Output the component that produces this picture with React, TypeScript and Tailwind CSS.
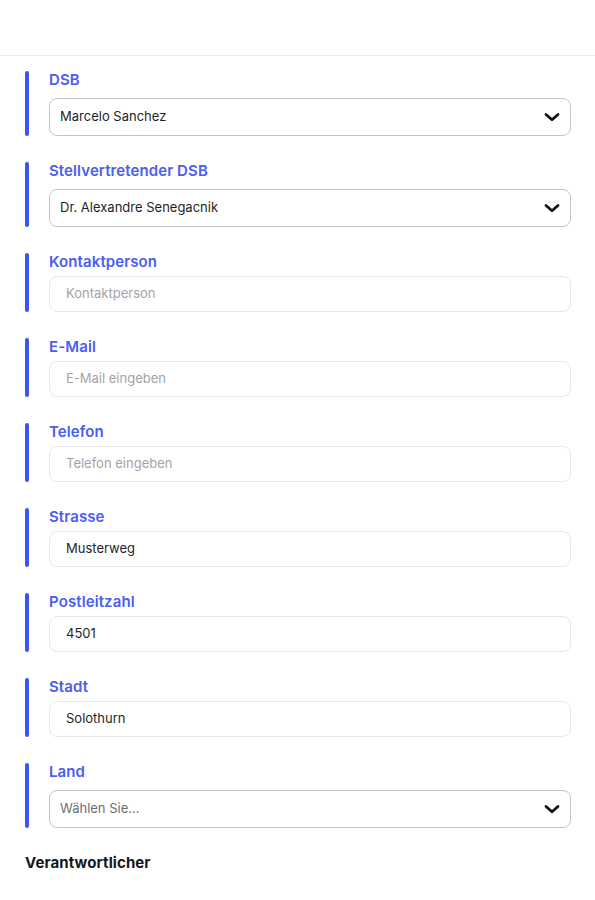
import React from "react";

type Field =
  | { kind: "select"; label: string; value?: string; placeholder?: string }
  | { kind: "text"; label: string; value?: string; placeholder?: string };

const FIELDS: Field[] = [
  { kind: "select", label: "DSB", value: "Marcelo Sanchez" },
  { kind: "select", label: "Stellvertretender DSB", value: "Dr. Alexandre Senegacnik" },
  { kind: "text", label: "Kontaktperson", placeholder: "Kontaktperson" },
  { kind: "text", label: "E-Mail", placeholder: "E-Mail eingeben" },
  { kind: "text", label: "Telefon", placeholder: "Telefon eingeben" },
  { kind: "text", label: "Strasse", value: "Musterweg" },
  { kind: "text", label: "Postleitzahl", value: "4501" },
  { kind: "text", label: "Stadt", value: "Solothurn" },
  { kind: "select", label: "Land", placeholder: "Wählen Sie..." },
];

function Chevron() {
  return (
    <svg width="18" height="12" viewBox="0 0 18 12" fill="none" className="shrink-0">
      <polyline
        points="3,3.5 9,8.8 15,3.5"
        stroke="#111"
        strokeWidth="2.8"
        strokeLinecap="round"
        strokeLinejoin="round"
      />
    </svg>
  );
}

function FieldRow({ field }: { field: Field }) {
  return (
    <div className="flex">
      <div className="w-1 shrink-0 rounded-full bg-[#3b55f3]" />
      <div className="ml-5 flex-1">
        <label className="block text-[15px] font-semibold leading-[18px] tracking-[0.1px] text-[#4a5df3]">
          {field.label}
        </label>
        {field.kind === "select" ? (
          <div className="mt-[9px] flex h-[38px] items-center justify-between rounded-lg border border-[#c4c4c6] bg-white pl-[10px] pr-[9px]">
            <span className={field.value ? "text-[13px] text-[#1f1f24]" : "text-[13px] text-[#6e6e76]"}>
              {field.value ?? field.placeholder}
            </span>
            <Chevron />
          </div>
        ) : (
          <div className="mt-[5px] flex h-[36px] items-center rounded-lg border border-[#e8e8ea] bg-white px-4">
            <span className={field.value ? "text-[13px] text-[#1f1f24]" : "text-[13px] text-[#a3a3aa]"}>
              {field.value ?? field.placeholder}
            </span>
          </div>
        )}
      </div>
    </div>
  );
}

export default function App() {
  return (
    <div className="min-h-[900px] bg-white" style={{ fontFamily: "Inter, 'Noto Sans', sans-serif" }}>
      <div className="h-[56px] border-b border-[#ececee]" />
      <div className="flex flex-col gap-[26px] pl-[25px] pr-[24px] pt-[15px]">
        {FIELDS.map((f) => (
          <FieldRow key={f.label} field={f} />
        ))}
      </div>
      <h3 className="mt-6 px-[25px] text-[15px] font-bold tracking-[0.1px] text-[#16161d]">Verantwortlicher</h3>
    </div>
  );
}
